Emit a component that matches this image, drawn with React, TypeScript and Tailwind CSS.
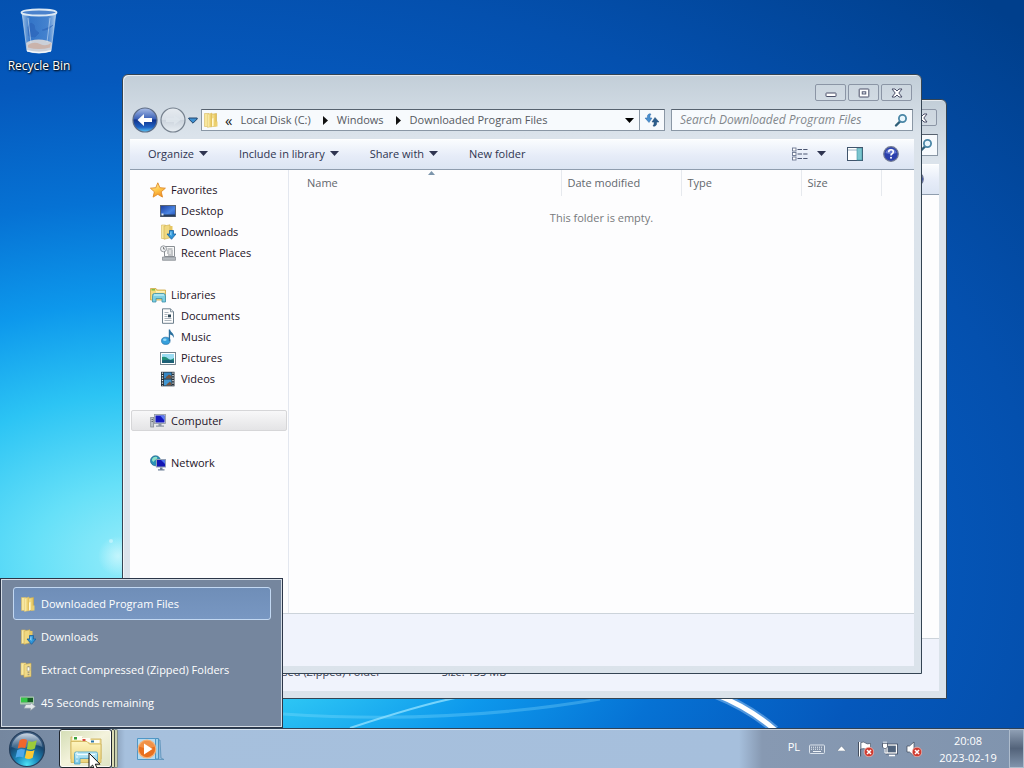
import React from "react";

type IconProps = { className?: string };

/* ---------- icons ---------- */

const FolderIcon = ({ className = "size-4" }: IconProps) => (
  <svg viewBox="0 0 16 16" className={className} aria-hidden="true">
    <defs>
      <linearGradient id="fold" x1="0" x2="1"><stop offset="0" stopColor="#fdf3c0" /><stop offset=".5" stopColor="#f2da80" /><stop offset="1" stopColor="#dfbb52" /></linearGradient>
    </defs>
    <path d="M1.500 1.500h4.500v13H1.500z" fill="#f8e79c" stroke="#d9bb62" strokeWidth=".6" />
    <path d="M7.500 2.500l6-1v12.500l-6 .8z" fill="url(#fold)" stroke="#cfac4c" strokeWidth=".6" />
    <path d="M4.500 2.500L9 1v13.500L4.500 15.500z" fill="url(#fold)" stroke="#dcc06a" strokeWidth=".5" />
    <path d="M9 6.500l1.500-.5v8l-1.500.5z" fill="#fff8d4" />
    <path d="M12.500 9.500h2v5H11z" fill="#ecd070" />
  </svg>
);

const DownloadsIcon = ({ className = "size-4" }: IconProps) => (
  <svg viewBox="0 0 16 16" className={className} aria-hidden="true">
    <path d="M1.500 1h4v13.500h-4z" fill="#f8e9a2" stroke="#d6b75c" strokeWidth=".6" />
    <path d="M4 2l6-1.200v13L4 15.300z" fill="#f0d880" stroke="#cfac4c" strokeWidth=".6" />
    <path d="M10 2h2.500v9H10z" fill="#e6c663" />
    <path d="M9.500 6.500h4V10H16l-4.500 5.300L7 10h2.500z" fill="#2f95d8" stroke="#1b5f9c" strokeWidth=".8" />
    <path d="M10.500 7.500h1V12l-1.500-1.500z" fill="#8fd2f7" />
  </svg>
);

const ZipIcon = ({ className = "size-4" }: IconProps) => (
  <svg viewBox="0 0 16 16" className={className} aria-hidden="true">
    <path d="M1 1h5v12H1z" fill="#f8e9a2" stroke="#d6b75c" strokeWidth=".6" />
    <path d="M4 2.500l7-1.200v13.200l-7 .8z" fill="#f0da88" stroke="#cfac4c" strokeWidth=".6" />
    <path d="M8.500 4v10" stroke="#a49b7c" strokeWidth="1.800" strokeDasharray="1.200 .8" />
    <path d="M7.200 5h2.600v4H7.200z" fill="#fdfdf5" stroke="#a59c78" strokeWidth=".6" />
  </svg>
);

const CopyIcon = ({ className = "size-4" }: IconProps) => (
  <svg viewBox="0 0 16 16" className={className} aria-hidden="true">
    <rect x="0" y="1.500" width="14" height="8" rx=".8" fill="#a9c9b0" />
    <rect x="1" y="2.800" width="12" height="4.400" fill="#155f24" />
    <rect x="1" y="2.800" width="6.500" height="4.400" fill="#36c648" />
    <path d="M6 9.500h4.500V7.500L15.500 11.500l-5 4v-2.300H4z" fill="#e3e7ea" stroke="#8f9aa5" strokeWidth=".6" />
  </svg>
);

const StarIcon = ({ className = "size-4" }: IconProps) => (
  <svg viewBox="0 0 16 16" className={className} aria-hidden="true">
    <defs><linearGradient id="star" y1="0" y2="1" x1=".3" x2=".7"><stop offset="0" stopColor="#fff0a0" /><stop offset=".5" stopColor="#ffc64a" /><stop offset="1" stopColor="#f08a1e" /></linearGradient></defs>
    <path d="M7.800.8l2.100 4.900 5.500.5-4.200 3.600 1.300 5.300-4.700-2.800-4.700 2.800 1.300-5.300L.4 6.200l5.400-.5z" fill="url(#star)" stroke="#e08a28" strokeWidth=".9" strokeLinejoin="round" />
  </svg>
);

const DesktopIcon = ({ className = "size-4" }: IconProps) => (
  <svg viewBox="0 0 16 16" className={className} aria-hidden="true">
    <defs><linearGradient id="desk" x1="0" y1="0" x2="1" y2="1"><stop offset="0" stopColor="#1c3c9e" /><stop offset=".6" stopColor="#4a86e4" /><stop offset="1" stopColor="#2450b4" /></linearGradient></defs>
    <rect x=".5" y="2.500" width="15" height="11" fill="url(#desk)" stroke="#5a6472" />
    <path d="M1 11.500h14v2H1z" fill="#273d5c" />
    <path d="M1.500 10.500h2v2h-2z" fill="#dce9f6" />
  </svg>
);

const RecentIcon = ({ className = "size-4" }: IconProps) => (
  <svg viewBox="0 0 16 16" className={className} aria-hidden="true">
    <path d="M4.500 1.500h10v10h-10z" fill="#fafafa" stroke="#8b9095" />
    <path d="M7.500 4h5M7 6h2.500m1 0h2.500M7 8h2.500m1 0h2.500M8 10h5" stroke="#8b9095" />
    <path d="M2.500 12h13v3.300h-13z" fill="#b6bbc0" stroke="#82878c" strokeWidth=".7" />
    <circle cx="3.500" cy="3.800" r="3" fill="#eef1f3" stroke="#8b9095" strokeWidth=".9" />
    <path d="M3.500 2v2h1.500" stroke="#666" strokeWidth=".8" fill="none" />
  </svg>
);

const LibrariesIcon = ({ className = "size-4" }: IconProps) => (
  <svg viewBox="0 0 16 16" className={className} aria-hidden="true">
    <path d="M.5 1.500h5.500l1 1.500h8.500V13H.5z" fill="#f3dc80" stroke="#cba746" strokeWidth=".8" />
    <path d="M1.500 2.800h3.500" stroke="#6fb83c" strokeWidth="1.300" />
    <path d="M6 4.800h8.800" stroke="#fff4bd" strokeWidth="1.500" />
    <path d="M2.500 8.500q0-2 2-2h8.500q2.500 0 2.500 2V15H12v-3.500H6V15H2.500z" fill="#7dcfe2" stroke="#3c8fa9" strokeWidth=".8" />
    <path d="M4 8h10" stroke="#c9f2fa" strokeWidth="1.200" />
  </svg>
);

const DocumentIcon = ({ className = "size-4" }: IconProps) => (
  <svg viewBox="0 0 16 16" className={className} aria-hidden="true">
    <path d="M2.500.8h8l3 3v11.500h-11z" fill="#fdfdfd" stroke="#6d7f8c" />
    <path d="M10.500.8v3h3" fill="#dfe5ea" stroke="#6d7f8c" strokeWidth=".8" />
    <path d="M4.500 4.500h4M4.500 6.500h3M4.500 8.500h3M4.500 10.500h7M4.500 12.500h7" stroke="#a3adb5" strokeWidth=".9" />
    <rect x="8" y="6.500" width="3" height="2.800" fill="#2f4756" />
  </svg>
);

const MusicIcon = ({ className = "size-4" }: IconProps) => (
  <svg viewBox="0 0 16 16" className={className} aria-hidden="true">
    <ellipse cx="5.800" cy="11.800" rx="4.300" ry="3.600" fill="#36a0dc" stroke="#2470a8" strokeWidth=".7" />
    <ellipse cx="4.800" cy="10.800" rx="1.800" ry="1.200" fill="#93d6f5" />
    <path d="M8.800 12V.5h1.300c.3 3 4.600 3.600 3.600 8.500-.5-2-2-3.200-3.600-3.500v6.500z" fill="#2a6f9d" />
  </svg>
);

const PictureIcon = ({ className = "size-4" }: IconProps) => (
  <svg viewBox="0 0 16 16" className={className} aria-hidden="true">
    <rect x=".5" y="2.500" width="15" height="12" fill="#fff" stroke="#75858f" />
    <rect x="2" y="4" width="12" height="9" fill="#9bdcf2" />
    <path d="M2 7q4-1 6 1.500T14 8v5H2z" fill="#21907a" />
    <path d="M2 10.500q6-1.500 12 0v2.500H2z" fill="#1c5f76" />
  </svg>
);

const VideoIcon = ({ className = "size-4" }: IconProps) => (
  <svg viewBox="0 0 16 16" className={className} aria-hidden="true">
    <rect x="1" y=".8" width="13.500" height="14.500" fill="#26313a" />
    <rect x="4" y="1.500" width="7.500" height="6" fill="#3787c4" />
    <rect x="4" y="8.500" width="7.500" height="6" fill="#4297d2" />
    <path d="M6 6l3-2.500L11.500 5v2.500H6zM7 13l3-2.500 1.500 2v2H6z" fill="#76553e" />
    <path d="M2.500 1.500v13M13 1.500v13" stroke="#eef2f5" strokeWidth="1.300" strokeDasharray="1.300 1.200" />
  </svg>
);

const ComputerIcon = ({ className = "size-4" }: IconProps) => (
  <svg viewBox="0 0 16 16" className={className} aria-hidden="true">
    <rect x=".7" y="4.500" width="3" height="9.500" fill="#bcc2c8" stroke="#7a828b" strokeWidth=".7" />
    <path d="M1.500 6.500h1.500M1.500 8.500h1.500" stroke="#4b545d" strokeWidth=".8" />
    <rect x="4.500" y="1.500" width="11" height="9" fill="#d8dde2" stroke="#8d959e" strokeWidth=".8" />
    <rect x="5.500" y="2.500" width="9" height="7" fill="#1519bf" />
    <path d="M10 2.500h4.500v5z" fill="#5c7cf0" />
    <path d="M8.500 10.500h3v2h2.500v1.300H6v-1.300h2.500z" fill="#8d98a4" />
  </svg>
);

const NetworkIcon = ({ className = "size-4" }: IconProps) => (
  <svg viewBox="0 0 16 16" className={className} aria-hidden="true">
    <circle cx="5.500" cy="5.800" r="5" fill="#2b93b6" stroke="#1d5f8b" strokeWidth=".7" />
    <path d="M2 4q2-3 5-2 1 1.500-1 2.500T3.500 7Q1.500 6 2 4z" fill="#8fe0c7" />
    <rect x="6.500" y="4.500" width="9" height="7.500" fill="#1317b4" stroke="#92a0b5" />
    <path d="M11 5h4v4z" fill="#4f74ee" />
    <path d="M10 12.500h2.500v1.700h2v1.300H8v-1.300h2z" fill="#6f8097" />
  </svg>
);

const SearchGlyph = ({ className = "size-4" }: IconProps) => (
  <svg viewBox="0 0 16 16" className={className} aria-hidden="true" fill="none">
    <path d="M7.500 9L3 13.500" stroke="#2f5f78" strokeWidth="2.400" strokeLinecap="round" />
    <circle cx="9.500" cy="6.500" r="3.600" fill="#e8f6fd" stroke="#4a86a6" strokeWidth="1.800" />
  </svg>
);

const RefreshIcon = ({ className = "size-4" }: IconProps) => (
  <svg viewBox="0 0 16 16" className={className} aria-hidden="true">
    <path d="M7 2Q4.500 1 3.500 3.500L3.300 6H1l4 4.500L8 6H5.900Q5.500 3.500 7 2z" fill="#4a90cf" stroke="#3069a5" strokeWidth=".5" />
    <path d="M9 14q2.500 1 3.500-1.500l.2-2.500H15l-4-4.500L8 10h2.100q.4 2.500-1.100 4z" fill="#2c5d8c" stroke="#1f4a77" strokeWidth=".5" />
  </svg>
);

const Down = ({ className = "h-[5px] w-[9px]" }: IconProps) => (
  <svg viewBox="0 0 9 5" className={className} aria-hidden="true"><path d="M0 0h9L4.500 5z" fill="currentColor" /></svg>
);

const Right = () => (
  <svg viewBox="0 0 5 9" className="h-[9px] w-[5px]" aria-hidden="true"><path d="M0 0v9l5-4.500z" fill="#111" /></svg>
);

const Orb = () => (
  <svg viewBox="0 0 38 38" className="size-[38px]" aria-hidden="true">
    <defs>
      <radialGradient id="orb" cx=".5" cy=".95" r=".85"><stop offset="0" stopColor="#4fe3f5" /><stop offset=".35" stopColor="#1d8ec0" /><stop offset=".75" stopColor="#17466f" /><stop offset="1" stopColor="#3d5c80" /></radialGradient>
      <linearGradient id="gloss" x1="0" y1="0" x2="0" y2="1"><stop offset="0" stopColor="#e6eef6" stopOpacity=".85" /><stop offset="1" stopColor="#9fb8cf" stopOpacity=".2" /></linearGradient>
    </defs>
    <circle cx="19" cy="19" r="17.500" fill="url(#orb)" stroke="#253f5c" strokeWidth="1.200" />
    <path d="M3.500 17a15.600 15.600 0 0 1 31 0Q26 13 19 17T3.500 17z" fill="url(#gloss)" />
    <path d="M11.500 10.500q3.800-2.500 7.600-.5l-1.800 8.200q-3.900-1.700-7.600.4z" fill="#f0662c" />
    <path d="M20.500 10.800q3.800 2 8.300-.5l-1.900 8.200q-4 2.200-8 .4z" fill="#9ccb3a" />
    <path d="M9.300 20q3.800-2 7.700-.4l-1.700 7.900q-3.900-1.800-7.800.3z" fill="#4ea8ea" />
    <path d="M18.500 20.300q4 1.800 8-.4l-1.800 7.900q-3.900 2.200-7.900.3z" fill="#fbc934" />
  </svg>
);

const ExplorerIcon = () => (
  <svg viewBox="0 0 34 34" className="size-[34px]" aria-hidden="true">
    <defs>
      <linearGradient id="exA" x1="0" y1="0" x2="0" y2="1"><stop offset="0" stopColor="#fdf4bf" /><stop offset="1" stopColor="#ecd27a" /></linearGradient>
      <linearGradient id="exB" x1="0" y1="0" x2="0" y2="1"><stop offset="0" stopColor="#c8effa" /><stop offset="1" stopColor="#73c4e2" /></linearGradient>
    </defs>
    <path d="M2 5h11l2 2h17v20H2z" fill="#f3e29c" stroke="#cdb260" strokeWidth=".9" />
    <path d="M3.500 4h10v4h-10z" fill="#fffdf2" /><path d="M5 5h3v2.500H5z" fill="#36a13c" />
    <path d="M12.500 6h9v4h-9z" fill="#fffdf2" /><path d="M13.500 7h3v2.500h-3z" fill="#d8493b" />
    <path d="M20.500 8h10v3h-10z" fill="#fffdf2" /><path d="M22 8.500h3v2h-3z" fill="#2b75a8" />
    <path d="M2 9.500h16l2.500 2.500H32v18.500H2z" fill="url(#exA)" stroke="#d3b860" strokeWidth=".9" />
    <path d="M5.500 21.500q0-1.500 1.500-1.500h20q1.500 0 1.500 1.500V32h-5v-5.500H11V32H5.500z" fill="url(#exB)" stroke="#57a8c9" strokeWidth=".9" />
    <path d="M8 22.500h18" stroke="#f1fcff" />
    <path d="M8 20v12" stroke="#eefaff" strokeDasharray="2 2" />
  </svg>
);

const PlayerIcon = () => (
  <svg viewBox="0 0 30 30" className="size-[30px]" aria-hidden="true">
    <path d="M8 6h17l1 18 3 1.500H8z" fill="#8fb8da" stroke="#5a90b8" strokeWidth=".8" />
    <path d="M5 4.500h18.500v20.500H5z" fill="#9dd0ec" stroke="#4d92bf" />
    <path d="M2.500 4.500h18v21h-18z" fill="#b5daf0" stroke="#4f97c6" />
    <circle cx="12" cy="15" r="8.800" fill="#e8701f" stroke="#f3b27a" strokeWidth="1.200" />
    <path d="M4 12.500a8.200 8.200 0 0 1 16 0Q12 16 4 12.500z" fill="#f7a763" opacity=".6" />
    <path d="M9 9.500l8.500 5.500L9 20.500z" fill="#fff" />
  </svg>
);

const RecycleBin = () => (
  <svg viewBox="0 0 40 48" className="h-12 w-10" aria-hidden="true">
    <defs>
      <linearGradient id="bin" x1="0" x2="1"><stop offset="0" stopColor="#cfe4f6" stopOpacity=".75" /><stop offset=".25" stopColor="#5c92d8" stopOpacity=".55" /><stop offset=".75" stopColor="#6fa1e0" stopOpacity=".6" /><stop offset="1" stopColor="#d8eafa" stopOpacity=".8" /></linearGradient>
    </defs>
    <path d="M3 5.500L8 44q12 4 24 0l5-38.500z" fill="url(#bin)" stroke="#b9d3ee" strokeWidth=".7" />
    <path d="M7.200 36q4-3.500 12.500-3.500T33 36l-1 8q-12 4-24 0z" fill="#dad8d9" opacity=".9" />
    <path d="M9 38q6-4 12-1t11-1l-1 4.500q-11 3-22 0z" fill="#c9aa9c" opacity=".75" />
    <path d="M8 43q12 3.500 24 0v1.500q-12 3.500-24 0z" fill="#f4f7fa" />
    <path d="M9 20l3-4 3 2 1 5 4 3-4 4-6-1zM23 23q5 1 11-5" fill="#2b62b8" stroke="#2b62b8" opacity=".6" />
    <ellipse cx="20" cy="5.500" rx="17.500" ry="3" fill="#4b82cc" stroke="#dbe8f4" strokeWidth="1.800" />
    <path d="M9 11l3 25M31 11l-3 24" stroke="#e8f3fd" strokeWidth="1" opacity=".5" />
  </svg>
);

const ViewIcon = () => (
  <svg viewBox="0 0 16 14" className="h-[14px] w-4" aria-hidden="true">
    {[1, 5.5, 10].map((y) => (
      <g key={y}>
        <rect x=".5" y={y} width="3.500" height="3" fill="#fff" stroke="#6b7690" strokeWidth=".9" />
        <path d={`M5.500 ${y + 1.5}h4.500m1.200 0h4.300`} stroke="#4a5570" strokeWidth="1.100" />
      </g>
    ))}
  </svg>
);

const PaneIcon = () => (
  <svg viewBox="0 0 16 14" className="h-[14px] w-4" aria-hidden="true">
    <rect x=".5" y=".5" width="15" height="13" fill="#fff" stroke="#40546c" />
    <path d="M1 3h14" stroke="#9db2c3" />
    <rect x="10" y="1.500" width="5" height="11.500" fill="#7cc6cf" stroke="#3e93a2" strokeWidth=".6" />
  </svg>
);

const HelpIcon = () => (
  <svg viewBox="0 0 16 16" className="size-4" aria-hidden="true">
    <circle cx="8" cy="8" r="7.300" fill="#2b40ad" stroke="#717a93" strokeWidth="1.200" />
    <path d="M2.500 7a5.700 5.700 0 0 1 11 0Q8 9 2.500 7z" fill="#7f92e0" opacity=".7" />
    <path d="M5.700 6.300q0-2.500 2.300-2.500t2.300 2q0 1.200-1.200 1.900T8 9.500" fill="none" stroke="#fff" strokeWidth="1.600" />
    <circle cx="8" cy="11.700" r="1" fill="#fff" />
  </svg>
);

const RedCross = () => (
  <g>
    <circle cx="11" cy="11" r="4.800" fill="#cf3b30" stroke="#f2c6c1" strokeWidth=".7" />
    <path d="M9 9l4 4m0-4l-4 4" stroke="#fff" strokeWidth="1.500" />
  </g>
);

/* ---------- window parts ---------- */

const capButton = "flex h-[17px] w-[31px] items-center justify-center rounded-[2px] border border-[#8b95a5] bg-white/10";

function CaptionButtons() {
  return (
    <div className="flex h-8 items-start justify-end gap-0.5 pt-[9px] pr-0.5">
      <button aria-label="Minimize" className={capButton}>
        <svg viewBox="0 0 12 10" className="h-[10px] w-3"><rect x="1" y="5" width="10" height="3.500" rx=".5" fill="#fff" stroke="#4a4f68" /></svg>
      </button>
      <button aria-label="Maximize" className={capButton}>
        <svg viewBox="0 0 12 10" className="h-[10px] w-3"><rect x="1.200" y="1" width="9.600" height="8" rx=".5" fill="#fff" stroke="#4a4f68" /><rect x="4.200" y="3.800" width="3.600" height="2.200" fill="#dfe5ee" stroke="#4a4f68" strokeWidth=".9" /></svg>
      </button>
      <button aria-label="Close" className={capButton}>
        <svg viewBox="0 0 12 10" className="h-[10px] w-3"><path d="M1 1h3l2 2 2-2h3L7.800 5 11 9H8L6 7 4 9H1l3.200-4z" fill="#fff" stroke="#4a4f68" strokeLinejoin="round" /></svg>
      </button>
    </div>
  );
}

const boxClass = "flex h-[22px] items-center border border-[#8a97a5] border-t-[#56616e] bg-[#f7fafd]";

function NavBar({ crumbs }: { crumbs: string[] }) {
  const placeholder = crumbs.length ? `Search ${crumbs[crumbs.length - 1]}` : undefined;
  return (
    <div className="flex h-[26px] items-center pr-px pl-0.5">
      <div className="flex items-center gap-0.5">
        <button aria-label="Back">
          <svg viewBox="0 0 26 26" className="size-[26px]">
            <defs><linearGradient id="back" x1="0" y1="0" x2="0" y2="1"><stop offset="0" stopColor="#a9bde6" /><stop offset=".45" stopColor="#3c62b8" /><stop offset=".5" stopColor="#12348c" /><stop offset=".8" stopColor="#1e62c4" /><stop offset="1" stopColor="#5cc8f5" /></linearGradient></defs>
            <circle cx="13" cy="13" r="12" fill="url(#back)" stroke="#5d6c85" strokeWidth="1.200" />
            <path d="M5.500 13l6.500-6v4h8v4h-8v4z" fill="#fff" />
          </svg>
        </button>
        <button aria-label="Forward">
          <svg viewBox="0 0 26 26" className="size-[26px]">
            <defs><linearGradient id="fwd" x1="0" y1="0" x2="0" y2="1"><stop offset="0" stopColor="#e6ebf0" /><stop offset=".49" stopColor="#d9e0e8" /><stop offset=".5" stopColor="#cbd3dc" /><stop offset="1" stopColor="#e8eef3" /></linearGradient></defs>
            <circle cx="13" cy="13" r="12" fill="url(#fwd)" stroke="#76818e" strokeWidth="1.200" />
            <path d="M20.500 13L14 8v3H6v4h8v3z" fill="#dfe6ec" opacity=".8" />
          </svg>
        </button>
        <button aria-label="Recent pages">
          <svg viewBox="0 0 10 7" className="h-[7px] w-[10px]"><path d="M.8 1h8.400v1L5 6.200.8 2z" fill="#3d8fd0" stroke="#24476e" /></svg>
        </button>
      </div>
      <div className={`${boxClass} ml-[3px] grow`}>
        <FolderIcon className="mx-px size-4" />
        <nav aria-label="Address" className="flex grow items-center text-[#55595f]">
          {crumbs.map((c, i) => (
            <React.Fragment key={c}>
              {i === 0
                ? <span className="mr-2 ml-[5px] text-[15px] leading-none text-[#222]">«</span>
                : <span className="mr-[9px] ml-3"><Right /></span>}
              <a href="#">{c}</a>
            </React.Fragment>
          ))}
        </nav>
        <button aria-label="Previous locations" className="pr-[5px]"><Down className="h-[5px] w-[9px] text-black" /></button>
        <button aria-label="Refresh" className="flex h-full w-[25px] items-center justify-center border-l border-[#8a97a5]"><RefreshIcon /></button>
      </div>
      <div className={`${boxClass} ml-[6px] w-[242px] pr-[3px] pl-2`}>
        <input
          type="search"
          aria-label="Search"
          placeholder={placeholder}
          className="min-w-0 grow bg-transparent text-[12px] italic outline-none placeholder:text-[#82878c]"
        />
        <SearchGlyph />
      </div>
    </div>
  );
}

function ToolBar({ children }: { children?: React.ReactNode }) {
  return (
    <div className="mt-[6px] flex h-[31px] items-center border-t border-b border-t-white border-b-[#8f9dae] bg-linear-to-b from-[#fafcfe] from-0% via-[#e6ecf8] via-55% to-[#dce5f3] pr-[15px] pb-0.5 pl-[18px] text-[#2e3450]">
      <div className="flex grow items-center gap-[31px]">{children}</div>
      <div className="flex items-center">
        <button aria-label="Change view"><ViewIcon /></button>
        <button aria-label="More options" className="ml-[9px]"><Down /></button>
        <button aria-label="Preview pane" className="ml-[21px]"><PaneIcon /></button>
        <button aria-label="Help" className="ml-5"><HelpIcon /></button>
      </div>
    </div>
  );
}

function WindowShell({ label, className, crumbs = [], commands, details, children }: {
  label: string; className: string; crumbs?: string[]; commands?: React.ReactNode; details?: React.ReactNode; children?: React.ReactNode;
}) {
  return (
    <section
      aria-label={label}
      className={`absolute flex flex-col rounded-t-[6px] border border-[#344453] bg-[#dbe3eb] bg-linear-to-b from-[#c2ced8] to-[#dbe3eb] to-[60px] px-[7px] pb-[7px] shadow-[inset_1px_1px_0_rgba(255,255,255,0.6)] ${className}`}
    >
      <CaptionButtons />
      <NavBar crumbs={crumbs} />
      <ToolBar>{commands}</ToolBar>
      <div className="flex grow bg-[#fdfdfe]">{children}</div>
      <footer className="flex h-[53px] shrink-0 border-t border-[#ccd3da] bg-[#f0f3fc]">{details}</footer>
    </section>
  );
}

const groups = [
  { name: "Favorites", Icon: StarIcon, items: [["Desktop", DesktopIcon], ["Downloads", DownloadsIcon], ["Recent Places", RecentIcon]] },
  { name: "Libraries", Icon: LibrariesIcon, items: [["Documents", DocumentIcon], ["Music", MusicIcon], ["Pictures", PictureIcon], ["Videos", VideoIcon]] },
  { name: "Computer", Icon: ComputerIcon, items: [], selected: true },
  { name: "Network", Icon: NetworkIcon, items: [] },
] as { name: string; Icon: React.FC<IconProps>; items: [string, React.FC<IconProps>][]; selected?: boolean }[];

function SideBar() {
  return (
    <nav aria-label="Places" className="flex w-[159px] shrink-0 flex-col gap-[21px] border-r border-[#e3e7ef] pt-[9px] pl-px text-[#1d1428]">
      {groups.map(({ name, Icon, items, selected }) => (
        <div key={name}>
          <a
            href="#"
            className={`mr-px flex h-[21px] items-center gap-[5px] rounded-[2px] border pl-[18px] ${selected ? "border-[#d6d6d8] bg-linear-to-b from-[#f8f8f9] to-[#e4e4e6]" : "border-transparent"}`}
          >
            <Icon />{name}
          </a>
          {items.map(([text, ItemIcon]) => (
            <a key={text} href="#" className="flex h-[21px] items-center gap-[5px] pl-[29px]"><ItemIcon />{text}</a>
          ))}
        </div>
      ))}
    </nav>
  );
}

function FileList() {
  const th = "h-[26px] border-r border-[#e6e9ee] p-0 pl-[6px] text-left font-normal";
  return (
    <div className="min-w-0 grow">
      <table className="w-full table-fixed border-collapse text-[#62676d]">
        <thead>
          <tr>
            <th className={`${th} relative pl-[18px]`}>
              Name
              <svg viewBox="0 0 7 4" className="absolute top-px left-[139px] h-1 w-[7px]" aria-hidden="true"><path d="M0 4h7L3.500 0z" fill="#7c95ab" /></svg>
            </th>
            <th className={`${th} w-[120px]`}>Date modified</th>
            <th className={`${th} w-[120px]`}>Type</th>
            <th className={`${th} w-20`}>Size</th>
            <td className="w-[33px]" />
          </tr>
        </thead>
        <tbody>
          <tr><td colSpan={5} className="pt-[14px] text-center text-[#77797c]">This folder is empty.</td></tr>
        </tbody>
      </table>
    </div>
  );
}

const jumpItems: [string, React.FC<IconProps>][] = [
  ["Downloaded Program Files", FolderIcon],
  ["Downloads", DownloadsIcon],
  ["Extract Compressed (Zipped) Folders", ZipIcon],
  ["45 Seconds remaining", CopyIcon],
];

function WindowList() {
  return (
    <div className="absolute bottom-0 left-0 z-20 w-[283px] border border-[#2c3648]">
      <ul className="border border-[#d5dde6] bg-[#75869e] pt-[7px] pr-2.5 pb-[7px] pl-[11px] text-white">
        {jumpItems.map(([text, Icon], i) => (
          <li key={text}>
            <button
              className={`flex h-[33px] w-full items-center gap-[5px] rounded-[3px] border pl-[6px] text-left ${i === 0 ? "border-[#c2d8f2] bg-linear-to-b from-[#6f8eb8] to-[#7897c2]" : "border-transparent"}`}
            >
              <Icon />{text}
            </button>
          </li>
        ))}
      </ul>
    </div>
  );
}

function TaskBar() {
  return (
    <footer className="flex h-10 items-center border-t border-[#2f4257] bg-[linear-gradient(90deg,#75879f_0,#7c90aa_110px,#a6c0dd_125px,#a6bfdc_calc(100%-285px),#8799b2_calc(100%-262px),#8094ae_100%)] shadow-[inset_0_1px_0_rgba(255,255,255,0.55)]">
      <button aria-label="Start" className="ml-2"><Orb /></button>
      <button aria-label="Windows Explorer" className="relative ml-[13px] flex h-[39px] w-[59px]">
        <span className="z-10 flex h-full w-[53px] items-center justify-center rounded-[3px] border border-[#20262e] bg-linear-to-br from-[#d3ddb4] via-[#f4f3dc] to-[#dde3c4] shadow-[inset_0_0_0_1px_rgba(255,255,255,0.8)]"><ExplorerIcon /></span>
        <span className="h-full w-[3px] rounded-r-[2px] border-y border-r border-[#4a5148] bg-[#dcdcb4]" />
        <span className="h-full w-[3px] rounded-r-[2px] border-y border-r border-[#7f8b8b] bg-[#c9cfae]" />
        <svg viewBox="0 0 13 20" className="absolute top-[23px] left-[29px] z-20 h-5 w-[13px]" aria-hidden="true">
          <path d="M1 1v15.500l3.600-3.400 2.400 5.600 2.700-1.200-2.400-5.300H12z" fill="#fff" stroke="#111" />
        </svg>
      </button>
      <button aria-label="Windows Media Player" className="ml-[17px]"><PlayerIcon /></button>
      <div className="flex h-full grow items-center justify-end text-white">
        <span className="mr-[9px] pb-1">PL</span>
        <svg viewBox="0 0 16 10" className="mr-3 h-[10px] w-4" aria-label="Keyboard" role="img">
          <rect x=".5" y="1" width="15" height="8.500" rx="1" fill="#8191a8" stroke="#dbe3ec" />
          <path d="M2 3.200h12M2 5.200h12" stroke="#eef3f8" strokeDasharray="1 1" /><path d="M4 7.500h8" stroke="#eef3f8" />
        </svg>
        <button aria-label="Show hidden icons" className="mr-3"><svg viewBox="0 0 9 5" className="h-[5px] w-[9px]"><path d="M0 5h9L4.500 0z" fill="#fff" stroke="#4a5a70" strokeWidth=".4" /></svg></button>
        <svg viewBox="0 0 16 16" className="mr-2 size-4" role="img" aria-label="Action Center">
          <path d="M1.500 1v14.500" stroke="#fff" strokeWidth="1.600" /><path d="M.5 1v14.500M2.600 8v7.500" stroke="#2b3444" strokeWidth=".8" />
          <path d="M3 1.500q3-1 4.500.5t5 .5V9q-3 .8-4.700-.6T3 8z" fill="#fff" stroke="#3b4657" strokeWidth=".6" />
          <RedCross />
        </svg>
        <svg viewBox="0 0 16 16" className="mr-2 size-4" role="img" aria-label="Network">
          <rect x="5" y="4" width="9.500" height="8" fill="#51647d" stroke="#28344a" strokeWidth="2.600" />
          <rect x="5" y="4" width="9.500" height="8" fill="#51647d" stroke="#fff" strokeWidth="1.300" />
          <path d="M7 14.500h6" stroke="#fff" strokeWidth="1.500" />
          <path d="M.5 2.500h5V6l-1.500 1.500h-2L.5 6z" fill="#fff" stroke="#28344a" strokeWidth=".7" /><path d="M2 .5v2M4 .5v2M3 7.500V12h2" stroke="#fff" fill="none" />
        </svg>
        <svg viewBox="0 0 16 16" className="mr-4 size-4" role="img" aria-label="Volume muted">
          <path d="M1 5h2.500L8 1v14l-4.500-4H1z" fill="#fff" stroke="#3b4657" strokeWidth=".7" />
          <RedCross />
        </svg>
        <button className="mr-[11px] w-[60px] text-center leading-[17px] whitespace-nowrap">
          <time className="block">20:08</time>
          <time className="block">2023-02-19</time>
        </button>
        <button aria-label="Show desktop" className="h-full w-[15px] border border-[#aebccc] bg-linear-to-b from-[#8f9fb4] via-[#53637a] to-[#8093ab]" />
      </div>
    </footer>
  );
}

export default function App() {
  return (
    <div className="flex min-h-screen flex-col overflow-hidden bg-[#0450a8] font-['Open_Sans','Noto_Sans',sans-serif] text-[11px] leading-4">
      <main className="relative grow overflow-hidden bg-[radial-gradient(ellipse_850px_560px_at_150px_560px,#9ceefa_0%,#66e0f8_14%,#2cc4f4_30%,#0d98ec_46%,#0672d4_64%,#0558bc_86%,#0450ae_105%,#003f8c_140%)]">
        <svg viewBox="0 0 1024 728" preserveAspectRatio="none" className="absolute inset-0 h-full w-full" aria-hidden="true">
          <defs><radialGradient id="glow"><stop offset="0" stopColor="#e6fcff" stopOpacity=".6" /><stop offset="1" stopColor="#e6fcff" stopOpacity="0" /></radialGradient></defs>
          <path d="M350 728Q420 705 455 698" stroke="#8fe0ff" strokeWidth="2" fill="none" opacity=".8" />
          <path d="M283 714Q450 725 600 699" stroke="#8fe0ff" strokeWidth="3" fill="none" opacity=".3" />
          <path d="M715 694Q750 708 775 730" stroke="#bfe2ff" strokeWidth="9" fill="none" opacity=".4" />
          <path d="M715 694Q750 708 775 730" stroke="#fff" strokeWidth="5" fill="none" />
          <circle cx="118" cy="556" r="20" fill="url(#glow)" />
          <circle cx="111" cy="541" r="2" fill="#e6fcff" opacity=".5" />
        </svg>

        <a href="#" className="absolute top-[7px] left-0 flex w-[78px] flex-col items-center gap-[3px] text-[12px] text-white [text-shadow:1px_1px_2px_#000,0_0_2px_#000]">
          <RecycleBin />
          Recycle Bin
        </a>

        <WindowShell
          label="Downloads"
          className="top-[99px] left-[147px] h-[600px] w-[800px]"
          details={
            <div className="flex gap-[61px] pt-[25px] pl-[81px] text-[#3a4152]">
              <span>Compressed (Zipped) Folder</span>
              <span>Size: 133 MB</span>
            </div>
          }
        />

        <WindowShell
          label="Downloaded Program Files"
          className="top-[74px] left-[122px] z-10 h-[600px] w-[800px]"
          crumbs={["Local Disk (C:)", "Windows", "Downloaded Program Files"]}
          commands={
            <>
              <button className="flex items-center gap-[5px]">Organize <Down /></button>
              <button className="flex items-center gap-[5px]">Include in library <Down /></button>
              <button className="flex items-center gap-[5px]">Share with <Down /></button>
              <button>New folder</button>
            </>
          }
        >
          <SideBar />
          <FileList />
        </WindowShell>

        <WindowList />
      </main>
      <TaskBar />
    </div>
  );
}
